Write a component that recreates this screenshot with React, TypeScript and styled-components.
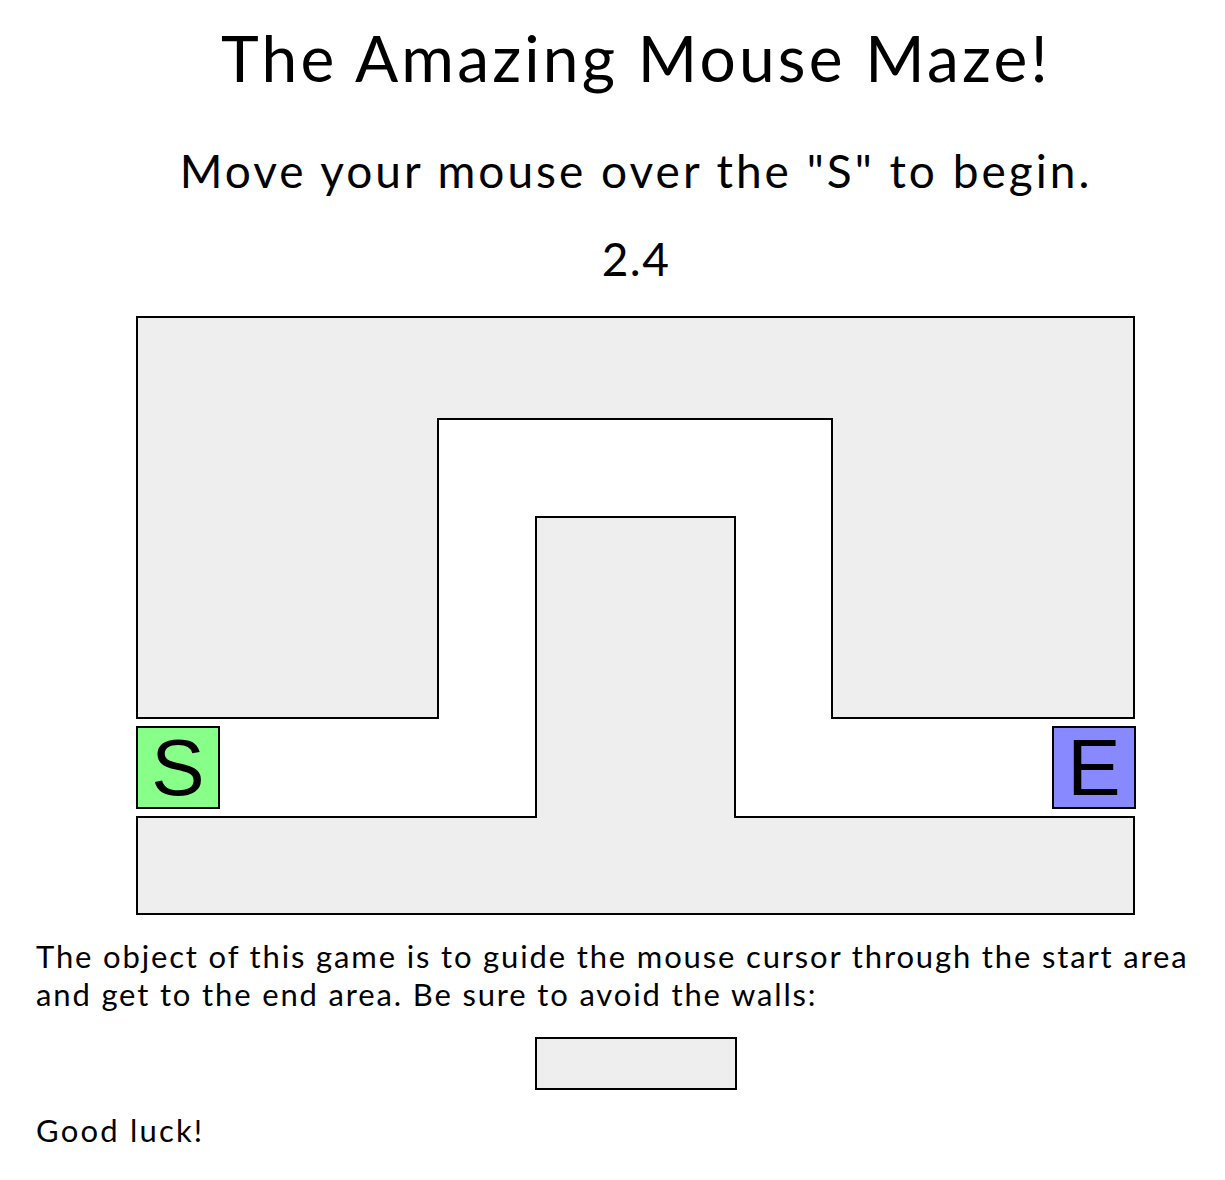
import React from "react";
import styled, { createGlobalStyle } from "styled-components";

const Global = createGlobalStyle`
  html, body { margin: 0; padding: 0; background: #fff; overflow: hidden; }
  body { font-family: "Lato", "Noto Sans", sans-serif; color: #000; }
`;

const Page = styled.main`
  width: 1200px;
  padding-left: 36px;
  display: flex;
  flex-direction: column;
`;

const Title = styled.h1`
  margin: 18px 0 0;
  font-size: 64px;
  font-weight: 400;
  line-height: 80px;
  letter-spacing: 3.2px;
  text-align: center;
`;

const Subtitle = styled.h2`
  margin: 43px 0 0;
  font-size: 46px;
  font-weight: 400;
  line-height: 60px;
  letter-spacing: 3px;
  text-align: center;
`;

const Timer = styled.div`
  margin: 28px 0 0;
  font-size: 46px;
  line-height: 60px;
  letter-spacing: 1.5px;
  text-align: center;
`;

const Maze = styled.div`
  position: relative;
  width: 1000px;
  height: 600px;
  margin: 27px 0 0 100px;
`;

const WallLayer = styled.svg`
  display: block;
  width: 1000px;
  height: 600px;
`;

const Zone = styled.div<{ $bg: string; $left: number }>`
  position: absolute;
  top: 410px;
  left: ${(p) => p.$left}px;
  width: 80px;
  height: 79px;
  border: 2px solid #000;
  background: ${(p) => p.$bg};
  font-family: "Liberation Sans", Arial, sans-serif;
  font-size: 80px;
  line-height: 79px;
  text-align: center;
`;

const Text = styled.p`
  margin: 21px 0 0;
  font-size: 31px;
  line-height: 38px;
  letter-spacing: 1.85px;
`;

const WallSample = styled.div`
  align-self: center;
  width: 198px;
  height: 49px;
  margin-top: 24px;
  border: 2px solid #000;
  background: #eee;
`;

const Luck = styled.p`
  margin: 21px 0 0;
  font-size: 31px;
  line-height: 39px;
  letter-spacing: 2.2px;
`;

export default function App() {
  return (
    <>
      <Global />
      <Page>
        <Title>The Amazing Mouse Maze!</Title>
        <Subtitle>Move your mouse over the "S" to begin.</Subtitle>
        <Timer>2.4</Timer>
        <Maze>
          <WallLayer viewBox="0 0 1000 600">
            <polygon
              points="1,1 998,1 998,402 696,402 696,103 302,103 302,402 1,402"
              fill="#eeeeee"
              stroke="#000"
              strokeWidth={2}
            />
            <polygon
              points="1,501 400,501 400,201 599,201 599,501 998,501 998,598 1,598"
              fill="#eeeeee"
              stroke="#000"
              strokeWidth={2}
            />
          </WallLayer>
          <Zone $bg="#88ff88" $left={0}>S</Zone>
          <Zone $bg="#8888ff" $left={916}>E</Zone>
        </Maze>
        <Text>
          The object of this game is to guide the mouse cursor through the start area and get to
          the end area. Be sure to avoid the walls:
        </Text>
        <WallSample />
        <Luck>Good luck!</Luck>
      </Page>
    </>
  );
}
